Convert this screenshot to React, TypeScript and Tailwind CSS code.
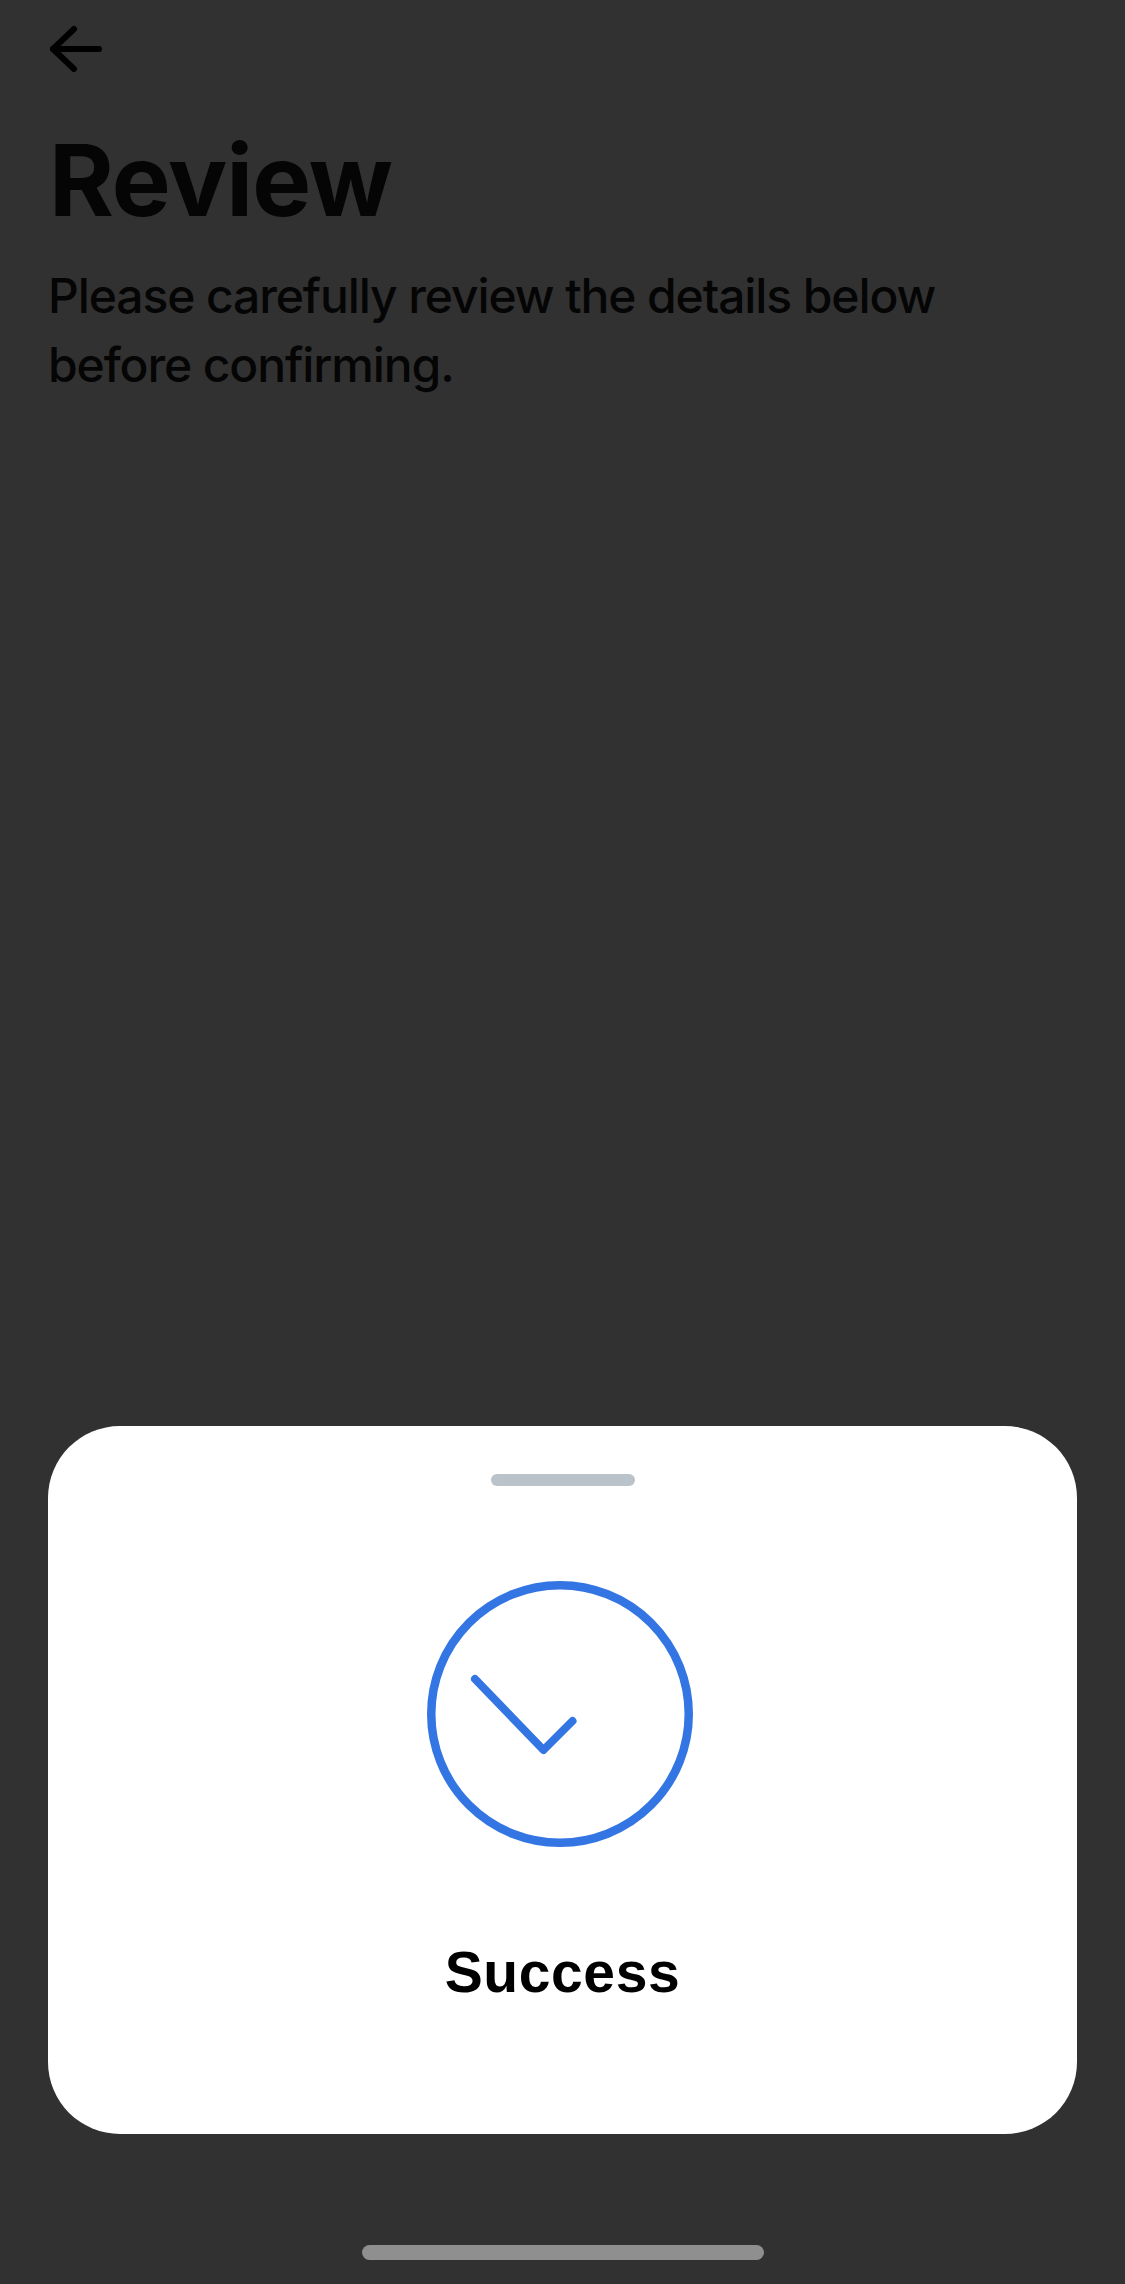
import React from 'react';

const inter = 'font-["Inter",sans-serif]';

const BackArrow = () => (
  <svg width="56" height="48" viewBox="0 0 56 48" fill="none" stroke="#000" strokeWidth="6" strokeLinecap="round" strokeLinejoin="round">
    <path d="M5 24H51" />
    <path d="M26 4L5 24L26 44" />
  </svg>
);

const SuccessIcon = () => (
  <svg width="266" height="266" viewBox="0 0 266 266" fill="none" stroke="#3375e3" strokeWidth="8.5" strokeLinecap="round" strokeLinejoin="round">
    <circle cx="133" cy="133" r="128.75" />
    <path d="M48 98L116.5 169L145.5 140" strokeWidth="8" />
  </svg>
);

export default function App() {
  return (
    <div className="flex h-[2284px] w-[1125px] flex-col overflow-hidden bg-[#313131]">
      <header className="px-12 pt-[25px]">
        <BackArrow />
        <h1 className={`mt-[47px] ml-[1px] text-[99px] leading-[120px] font-bold tracking-[-1px] text-[#050505] ${inter}`}>Review</h1>
        <p className={`mt-[21px] w-[1000px] text-[48px] leading-[69px] font-[450] tracking-[-1.1px] text-[#050505] ${inter}`}>
          Please carefully review the details below before confirming.
        </p>
      </header>

      <div className="mx-12 mt-auto flex h-[708px] w-[1029px] flex-col items-center rounded-[72px] bg-white">
        <div className="mt-12 h-3 w-[144px] rounded-full bg-[#bbc3ca]" />
        <div className="mt-[95px] -ml-[5px]">
          <SuccessIcon />
        </div>
        <div className="mt-[92px] font-['Liberation_Sans',sans-serif] text-[57px] leading-[66px] font-bold tracking-[0.6px] text-black">Success</div>
      </div>

      <div className="mt-[111px] mb-6 h-[15px] w-[402px] self-center rounded-full bg-[#8f8f8f]" />
    </div>
  );
}
